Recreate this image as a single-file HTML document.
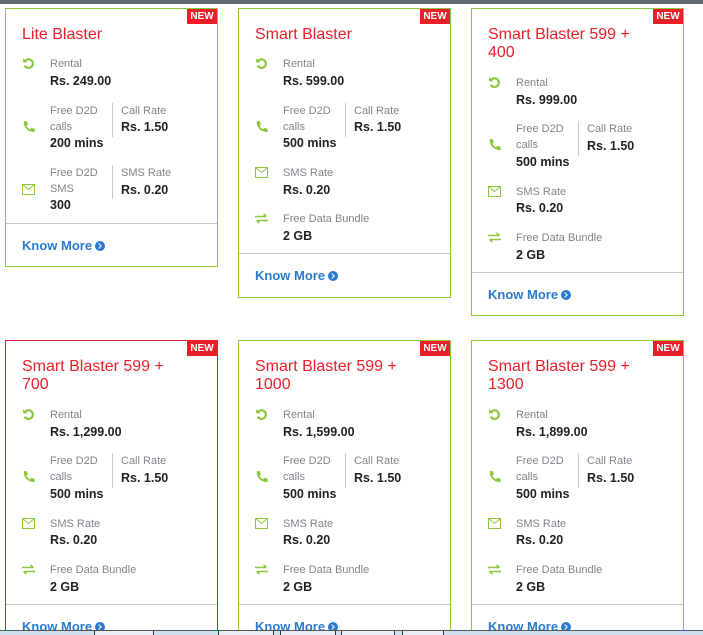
<!DOCTYPE html>
<html><head><meta charset="utf-8"><style>
*{margin:0;padding:0;box-sizing:border-box}
html{width:703px;height:635px;overflow:hidden}
body{width:703px;height:635px;overflow:hidden;background:#fff;font-family:"Liberation Sans",sans-serif;position:relative}
.bar{position:absolute;left:0;top:0;width:703px;height:4px;background:#5f6b73}
.c{position:absolute;width:213px;border:1px solid #8cc63f;background:#fff}
.c.r{border-color:#e8202a}
.c div,.c svg{position:absolute}
.new{right:0;top:0;width:30px;height:15px;background:#e8202a;color:#fff;font-size:10px;font-weight:bold;line-height:15px;text-align:center}
.t{left:16px;color:#e8202a;font-size:16px;line-height:18px;white-space:nowrap}
.l{color:#80858b;font-size:11px;line-height:14px;white-space:nowrap}
.v{color:#222;font-size:12.5px;font-weight:bold;line-height:14px;white-space:nowrap}
.x1{left:44px}.x2{left:115px}
.dv{left:106px;width:1px;background:#c2cbd3}
.hr{left:0;right:0;height:1px;background:#c2cbd3}
.k{left:16px;color:#2a7ad0;font-size:13px;font-weight:bold;line-height:14px;white-space:nowrap}
.k i{display:inline-block;width:10px;height:10px;border-radius:50%;background:#2a7ad0;vertical-align:-1px;margin-left:3px;position:relative}
.k i:after{content:"";position:absolute;left:2px;top:3px;width:3px;height:3px;border-right:1.5px solid #fff;border-bottom:1.5px solid #fff;transform:rotate(-45deg)}
.ic{left:16px}
.tb{position:absolute;left:0;top:630px;width:703px;height:5px;background:#cfe0ee;border-top:1px solid #555}
.tb span{position:absolute;top:0;height:5px;border-left:1px solid #333;border-right:1px solid #333;background:#e8eef4}
</style></head><body>
<div class="bar"></div>

<div class="c" style="left:5px;top:8px;height:259px">
<div class="new">NEW</div>
<div class="t" style="top:17px">Lite Blaster</div>
<svg class="ic" style="top:48px" width="13" height="13" viewBox="0 0 12 12"><path d="M3 3.5A4 4 0 1 1 2.5 8" fill="none" stroke="#8cc63f" stroke-width="2"/><path d="M1 1v4h4" fill="#8cc63f"/></svg>
<div class="l x1" style="top:48px">Rental</div>
<div class="v x1" style="top:65px">Rs. 249.00</div>
<svg class="ic" style="top:111px" width="13" height="13" viewBox="0 0 12 12"><path d="M2 1l2.5 0 1 3-1.5 1.2c.8 1.5 2 2.8 3.5 3.5L8.7 7.2l3 1V11c-6 .5-10.5-4-10-10z" fill="#8cc63f"/></svg>
<div class="l x1" style="top:95px">Free D2D</div>
<div class="l x1" style="top:111px">calls</div>
<div class="v x1" style="top:127px">200 mins</div>
<div class="dv" style="top:94px;height:34px"></div>
<div class="l x2" style="top:95px">Call Rate</div>
<div class="v x2" style="top:111px">Rs. 1.50</div>
<svg class="ic" style="top:175px" width="13" height="11" viewBox="0 0 13 11"><rect x=".5" y=".5" width="12" height="10" fill="none" stroke="#8cc63f"/><path d="M.5 .5l6 5 6-5" fill="none" stroke="#8cc63f"/></svg>
<div class="l x1" style="top:157px">Free D2D</div>
<div class="l x1" style="top:173px">SMS</div>
<div class="v x1" style="top:189px">300</div>
<div class="dv" style="top:156px;height:34px"></div>
<div class="l x2" style="top:157px">SMS Rate</div>
<div class="v x2" style="top:174px">Rs. 0.20</div>
<div class="hr" style="top:214px"></div>
<div class="k" style="top:230px">Know More<i></i></div>
</div>

<div class="c" style="left:238px;top:8px;height:290px">
<div class="new">NEW</div>
<div class="t" style="top:17px">Smart Blaster</div>
<svg class="ic" style="top:48px" width="13" height="13" viewBox="0 0 12 12"><path d="M3 3.5A4 4 0 1 1 2.5 8" fill="none" stroke="#8cc63f" stroke-width="2"/><path d="M1 1v4h4" fill="#8cc63f"/></svg>
<div class="l x1" style="top:48px">Rental</div>
<div class="v x1" style="top:65px">Rs. 599.00</div>
<svg class="ic" style="top:111px" width="13" height="13" viewBox="0 0 12 12"><path d="M2 1l2.5 0 1 3-1.5 1.2c.8 1.5 2 2.8 3.5 3.5L8.7 7.2l3 1V11c-6 .5-10.5-4-10-10z" fill="#8cc63f"/></svg>
<div class="l x1" style="top:95px">Free D2D</div>
<div class="l x1" style="top:111px">calls</div>
<div class="v x1" style="top:127px">500 mins</div>
<div class="dv" style="top:94px;height:34px"></div>
<div class="l x2" style="top:95px">Call Rate</div>
<div class="v x2" style="top:111px">Rs. 1.50</div>
<svg class="ic" style="top:158px" width="13" height="11" viewBox="0 0 13 11"><rect x=".5" y=".5" width="12" height="10" fill="none" stroke="#8cc63f"/><path d="M.5 .5l6 5 6-5" fill="none" stroke="#8cc63f"/></svg>
<div class="l x1" style="top:157px">SMS Rate</div>
<div class="v x1" style="top:174px">Rs. 0.20</div>
<svg class="ic" style="top:204px" width="13" height="11" viewBox="0 0 13 11"><path d="M0 3.5h11M8.5 1l3 2.5M13 7.5H2M4.5 10l-3-2.5" fill="none" stroke="#8cc63f" stroke-width="1.6"/></svg>
<div class="l x1" style="top:203px">Free Data Bundle</div>
<div class="v x1" style="top:220px">2 GB</div>
<div class="hr" style="top:244px"></div>
<div class="k" style="top:260px">Know More<i></i></div>
</div>

<div class="c" style="left:471px;top:8px;height:308px">
<div class="new">NEW</div>
<div class="t" style="top:17px">Smart Blaster 599 +<br>400</div>
<svg class="ic" style="top:67px" width="13" height="13" viewBox="0 0 12 12"><path d="M3 3.5A4 4 0 1 1 2.5 8" fill="none" stroke="#8cc63f" stroke-width="2"/><path d="M1 1v4h4" fill="#8cc63f"/></svg>
<div class="l x1" style="top:67px">Rental</div>
<div class="v x1" style="top:84px">Rs. 999.00</div>
<svg class="ic" style="top:129px" width="13" height="13" viewBox="0 0 12 12"><path d="M2 1l2.5 0 1 3-1.5 1.2c.8 1.5 2 2.8 3.5 3.5L8.7 7.2l3 1V11c-6 .5-10.5-4-10-10z" fill="#8cc63f"/></svg>
<div class="l x1" style="top:113px">Free D2D</div>
<div class="l x1" style="top:129px">calls</div>
<div class="v x1" style="top:146px">500 mins</div>
<div class="dv" style="top:112px;height:35px"></div>
<div class="l x2" style="top:113px">Call Rate</div>
<div class="v x2" style="top:130px">Rs. 1.50</div>
<svg class="ic" style="top:177px" width="13" height="11" viewBox="0 0 13 11"><rect x=".5" y=".5" width="12" height="10" fill="none" stroke="#8cc63f"/><path d="M.5 .5l6 5 6-5" fill="none" stroke="#8cc63f"/></svg>
<div class="l x1" style="top:176px">SMS Rate</div>
<div class="v x1" style="top:192px">Rs. 0.20</div>
<svg class="ic" style="top:223px" width="13" height="11" viewBox="0 0 13 11"><path d="M0 3.5h11M8.5 1l3 2.5M13 7.5H2M4.5 10l-3-2.5" fill="none" stroke="#8cc63f" stroke-width="1.6"/></svg>
<div class="l x1" style="top:222px">Free Data Bundle</div>
<div class="v x1" style="top:239px">2 GB</div>
<div class="hr" style="top:263px"></div>
<div class="k" style="top:279px">Know More<i></i></div>
</div>

<div class="c r" style="left:5px;top:340px;height:308px">
<div class="new">NEW</div>
<div class="t" style="top:17px">Smart Blaster 599 +<br>700</div>
<svg class="ic" style="top:67px" width="13" height="13" viewBox="0 0 12 12"><path d="M3 3.5A4 4 0 1 1 2.5 8" fill="none" stroke="#8cc63f" stroke-width="2"/><path d="M1 1v4h4" fill="#8cc63f"/></svg>
<div class="l x1" style="top:67px">Rental</div>
<div class="v x1" style="top:84px">Rs. 1,299.00</div>
<svg class="ic" style="top:129px" width="13" height="13" viewBox="0 0 12 12"><path d="M2 1l2.5 0 1 3-1.5 1.2c.8 1.5 2 2.8 3.5 3.5L8.7 7.2l3 1V11c-6 .5-10.5-4-10-10z" fill="#8cc63f"/></svg>
<div class="l x1" style="top:113px">Free D2D</div>
<div class="l x1" style="top:129px">calls</div>
<div class="v x1" style="top:146px">500 mins</div>
<div class="dv" style="top:112px;height:35px"></div>
<div class="l x2" style="top:113px">Call Rate</div>
<div class="v x2" style="top:130px">Rs. 1.50</div>
<svg class="ic" style="top:177px" width="13" height="11" viewBox="0 0 13 11"><rect x=".5" y=".5" width="12" height="10" fill="none" stroke="#8cc63f"/><path d="M.5 .5l6 5 6-5" fill="none" stroke="#8cc63f"/></svg>
<div class="l x1" style="top:176px">SMS Rate</div>
<div class="v x1" style="top:192px">Rs. 0.20</div>
<svg class="ic" style="top:223px" width="13" height="11" viewBox="0 0 13 11"><path d="M0 3.5h11M8.5 1l3 2.5M13 7.5H2M4.5 10l-3-2.5" fill="none" stroke="#8cc63f" stroke-width="1.6"/></svg>
<div class="l x1" style="top:222px">Free Data Bundle</div>
<div class="v x1" style="top:239px">2 GB</div>
<div class="hr" style="top:263px"></div>
<div class="k" style="top:279px">Know More<i></i></div>
</div>

<div class="c" style="left:238px;top:340px;height:308px">
<div class="new">NEW</div>
<div class="t" style="top:17px">Smart Blaster 599 +<br>1000</div>
<svg class="ic" style="top:67px" width="13" height="13" viewBox="0 0 12 12"><path d="M3 3.5A4 4 0 1 1 2.5 8" fill="none" stroke="#8cc63f" stroke-width="2"/><path d="M1 1v4h4" fill="#8cc63f"/></svg>
<div class="l x1" style="top:67px">Rental</div>
<div class="v x1" style="top:84px">Rs. 1,599.00</div>
<svg class="ic" style="top:129px" width="13" height="13" viewBox="0 0 12 12"><path d="M2 1l2.5 0 1 3-1.5 1.2c.8 1.5 2 2.8 3.5 3.5L8.7 7.2l3 1V11c-6 .5-10.5-4-10-10z" fill="#8cc63f"/></svg>
<div class="l x1" style="top:113px">Free D2D</div>
<div class="l x1" style="top:129px">calls</div>
<div class="v x1" style="top:146px">500 mins</div>
<div class="dv" style="top:112px;height:35px"></div>
<div class="l x2" style="top:113px">Call Rate</div>
<div class="v x2" style="top:130px">Rs. 1.50</div>
<svg class="ic" style="top:177px" width="13" height="11" viewBox="0 0 13 11"><rect x=".5" y=".5" width="12" height="10" fill="none" stroke="#8cc63f"/><path d="M.5 .5l6 5 6-5" fill="none" stroke="#8cc63f"/></svg>
<div class="l x1" style="top:176px">SMS Rate</div>
<div class="v x1" style="top:192px">Rs. 0.20</div>
<svg class="ic" style="top:223px" width="13" height="11" viewBox="0 0 13 11"><path d="M0 3.5h11M8.5 1l3 2.5M13 7.5H2M4.5 10l-3-2.5" fill="none" stroke="#8cc63f" stroke-width="1.6"/></svg>
<div class="l x1" style="top:222px">Free Data Bundle</div>
<div class="v x1" style="top:239px">2 GB</div>
<div class="hr" style="top:263px"></div>
<div class="k" style="top:279px">Know More<i></i></div>
</div>

<div class="c" style="left:471px;top:340px;height:308px">
<div class="new">NEW</div>
<div class="t" style="top:17px">Smart Blaster 599 +<br>1300</div>
<svg class="ic" style="top:67px" width="13" height="13" viewBox="0 0 12 12"><path d="M3 3.5A4 4 0 1 1 2.5 8" fill="none" stroke="#8cc63f" stroke-width="2"/><path d="M1 1v4h4" fill="#8cc63f"/></svg>
<div class="l x1" style="top:67px">Rental</div>
<div class="v x1" style="top:84px">Rs. 1,899.00</div>
<svg class="ic" style="top:129px" width="13" height="13" viewBox="0 0 12 12"><path d="M2 1l2.5 0 1 3-1.5 1.2c.8 1.5 2 2.8 3.5 3.5L8.7 7.2l3 1V11c-6 .5-10.5-4-10-10z" fill="#8cc63f"/></svg>
<div class="l x1" style="top:113px">Free D2D</div>
<div class="l x1" style="top:129px">calls</div>
<div class="v x1" style="top:146px">500 mins</div>
<div class="dv" style="top:112px;height:35px"></div>
<div class="l x2" style="top:113px">Call Rate</div>
<div class="v x2" style="top:130px">Rs. 1.50</div>
<svg class="ic" style="top:177px" width="13" height="11" viewBox="0 0 13 11"><rect x=".5" y=".5" width="12" height="10" fill="none" stroke="#8cc63f"/><path d="M.5 .5l6 5 6-5" fill="none" stroke="#8cc63f"/></svg>
<div class="l x1" style="top:176px">SMS Rate</div>
<div class="v x1" style="top:192px">Rs. 0.20</div>
<svg class="ic" style="top:223px" width="13" height="11" viewBox="0 0 13 11"><path d="M0 3.5h11M8.5 1l3 2.5M13 7.5H2M4.5 10l-3-2.5" fill="none" stroke="#8cc63f" stroke-width="1.6"/></svg>
<div class="l x1" style="top:222px">Free Data Bundle</div>
<div class="v x1" style="top:239px">2 GB</div>
<div class="hr" style="top:263px"></div>
<div class="k" style="top:279px">Know More<i></i></div>
</div>

<div class="tb"><span style="left:94px;width:60px"></span><span style="left:218px;width:56px"></span><span style="left:280px;width:56px"></span><span style="left:341px;width:54px"></span><span style="left:402px;width:42px"></span></div>
</body></html>
